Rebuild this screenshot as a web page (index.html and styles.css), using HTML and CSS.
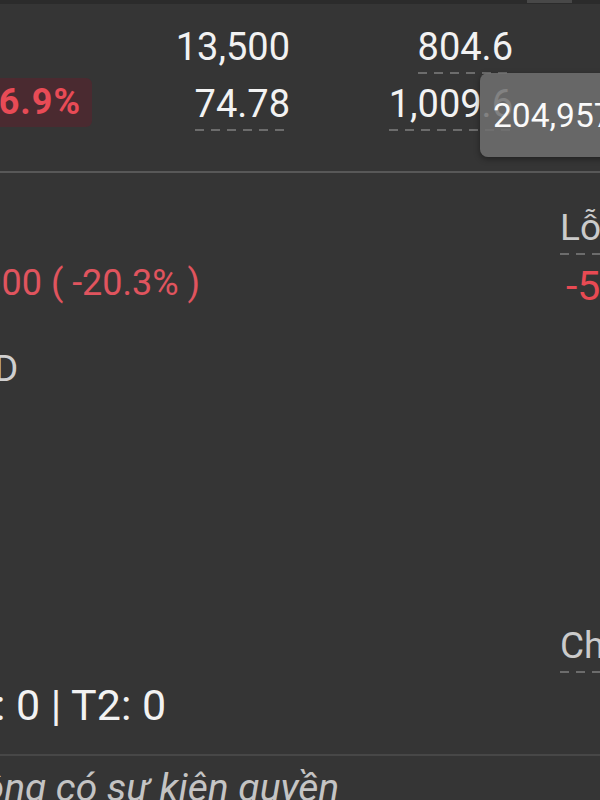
FILE: index.html
```html
<!DOCTYPE html>
<html lang="vi">
<head>
    <meta charset="UTF-8">
    <meta name="viewport" content="width=device-width, initial-scale=1.0">
    <title>Chi tiết mã</title>
    <link rel="stylesheet" href="styles.css">
</head>
<body>
    <div class="tabs"><div class="tab-active"></div></div>

    <div class="quote">
        <div class="cell"></div>
        <div class="cell num">13,500</div>
        <div class="cell num"><span class="dash">804.6</span></div>
        <div class="cell badge-cell"><span class="badge">-16.9%</span></div>
        <div class="cell num"><span class="dash">74.78</span></div>
        <div class="cell num"><span class="dash">1,009.6</span></div>

        <div class="tooltip">204,957</div>
    </div>

    <div class="details">
        <div class="col-left">
            <div class="pnl">-2,000 ( -20.3% )</div>
            <div class="unit">VND</div>
            <div class="t-row">T0: 0 | T1: 0 | T2: 0</div>
        </div>
        <div class="col-right">
            <div class="label label-first"><span class="dash">Lỗ</span></div>
            <div class="loss">-5</div>
            <div class="label label-last"><span class="dash">Ch</span></div>
        </div>
    </div>

    <div class="note">Không có sự kiện quyền</div>
</body>
</html>
```

FILE: styles.css
```css
html, body {
    margin: 0;
    overflow: hidden;
}
body {
    width: 600px;
    height: 800px;
    background: #353535;
    color: #f2f2f2;
    font-family: Roboto, 'Noto Sans', sans-serif;
    white-space: nowrap;
}
.tabs {
    height: 4px;
    background: #2b2b2b;
}
.tab-active {
    margin-left: 527px;
    width: 45px;
    height: 3px;
    background: #484848;
}
.quote {
    position: relative;
    height: 169px;
    box-sizing: border-box;
    padding-top: 15px;
    display: grid;
    grid-template-columns: 92px 198px 223px;
    grid-auto-rows: 57px;
    align-content: start;
    border-bottom: 2px solid #585858;
}
.cell {
    font-size: 38px;
    line-height: 57px;
}
.num {
    text-align: right;
}
.dash {
    display: inline-block;
    line-height: 50px;
    padding-bottom: 2px;
    background-image: linear-gradient(to right, #6c6c6c 9px, transparent 9px);
    background-size: 16px 2px;
    background-repeat: repeat-x;
    background-position: left bottom;
}
.badge-cell {
    display: flex;
    justify-content: flex-end;
    align-items: flex-start;
}
.badge {
    margin-top: 2px;
    height: 49px;
    line-height: 49px;
    padding: 0 11px 0 8px;
    border-radius: 6px;
    background: #4a2a30;
    color: #e84b56;
    font-size: 36px;
    font-weight: bold;
    letter-spacing: 1px;
}
.tooltip {
    position: absolute;
    left: 480px;
    top: 69px;
    width: 150px;
    height: 84px;
    box-sizing: border-box;
    padding-left: 13px;
    border-radius: 8px;
    background: rgba(112, 112, 112, 0.86);
    box-shadow: 0 2px 6px rgba(0, 0, 0, 0.4);
    color: #fafafa;
    font-size: 33.5px;
    line-height: 86px;
}
.details {
    display: flex;
    height: 581px;
    border-bottom: 2px solid #474747;
}
.col-left {
    flex: 0 0 560px;
    display: flex;
    flex-direction: column;
    align-items: flex-start;
}
.pnl {
    margin-top: 85px;
    margin-left: -56px;
    font-size: 36px;
    line-height: 50px;
    color: #e0545e;
}
.unit {
    margin-top: 36px;
    margin-left: -56px;
    font-size: 37px;
    line-height: 50px;
    color: #cfcfcf;
}
.t-row {
    margin-top: 286px;
    margin-left: -181px;
    font-size: 43px;
    line-height: 50px;
}
.col-right {
    flex: 1;
}
.label {
    font-size: 37px;
    line-height: 49px;
    color: #cbcbcb;
}
.label-first {
    margin-top: 30px;
}
.label-last {
    margin-top: 310px;
}
.loss {
    margin-top: 6px;
    margin-left: 6px;
    font-size: 41px;
    line-height: 50px;
    color: #e84a53;
}
.note {
    margin-top: 7px;
    margin-left: -62px;
    font-size: 39px;
    line-height: 50px;
    font-style: italic;
    color: #c4c4c4;
}
```
